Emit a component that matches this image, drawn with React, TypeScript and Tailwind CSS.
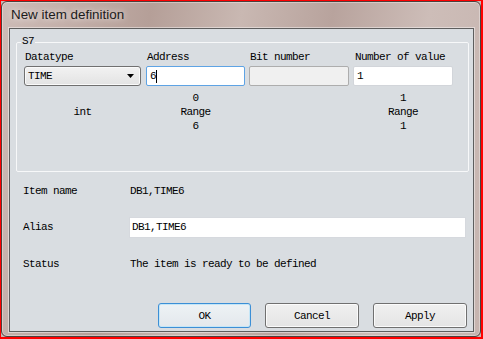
import React from 'react';

const mono = "font-['Liberation_Mono',monospace] text-[11px] tracking-[-0.6px] leading-[12px] text-black";

function Column({ lines }: { lines: string[] }) {
  return (
    <div className="flex flex-col items-center leading-[14px]">
      {lines.map((l, i) => (
        <span key={i} className="h-[14px]">{l}</span>
      ))}
    </div>
  );
}

export default function App() {
  return (
    <div className="w-[483px] h-[339px] border-l border-t border-r-2 border-b-2 border-[#ff0000] bg-[#c7b5b0]">
      <div className="h-full flex flex-col rounded-[6px] border border-[#4d403c] bg-[linear-gradient(100deg,#cdbcb7_0%,#c4b0aa_12%,#b59f98_28%,#c9b8b2_45%,#b8a39d_62%,#cdbdb8_80%,#c6b4af_100%)] shadow-[inset_0_0_0_1px_rgba(255,255,255,0.35)]">
        {/* Title bar */}
        <div className="h-[26px] flex items-center pl-[9px]">
          <span className="font-['Liberation_Sans',Arial,sans-serif] text-[13.4px] text-[#1b1b1b] [text-shadow:0_0_6px_rgba(255,255,255,0.9)]">
            New item definition
          </span>
        </div>

        {/* Client area */}
        <div className={`flex-1 ml-[7px] mr-[6px] mb-[4px] flex flex-col border border-[#5e5e5e] bg-[#d9dde1] shadow-[0_0_0_1px_rgba(255,255,255,0.45)] ${mono}`}>
          {/* S7 group box */}
          <div className="relative mt-[13px] ml-[6px] mr-[4px] h-[130px] border border-[#f7f8f9] rounded-[2px] pl-[7px] pt-[8px]">
            <span className="absolute left-[4px] top-[-8px] px-[1px] bg-[#d9dde1]">S7</span>

            <div className="grid grid-cols-[122px_103px_104px_100px]">
              <span className="pl-[1px]">Datatype</span>
              <span className="pl-[1px]">Address</span>
              <span className="pl-[1px]">Bit number</span>
              <span className="pl-[2px]">Number of value</span>
            </div>

            <div className="grid grid-cols-[122px_103px_104px_100px] mt-[3px]">
              <div className="w-[117px] h-[20px] flex items-center justify-between px-[3px] rounded-[3px] border border-[#707070] bg-[linear-gradient(#f2f2f2,#e3e3e3)] shadow-[inset_0_0_0_1px_#fafafa]">
                <span>TIME</span>
                <svg width="8" height="5" viewBox="0 0 8 5" className="mr-[2px]">
                  <path d="M0 0h7L3.5 4z" fill="#000" />
                </svg>
              </div>
              <div className="w-[99px] h-[20px] flex items-center px-[3px] rounded-[2px] border border-[#5ea3e4] bg-white">
                <span>6</span>
                <span className="w-px h-[13px] bg-black" />
              </div>
              <div className="w-[100px] h-[20px] rounded-[2px] border border-[#adadad] bg-[#f0f0f0]" />
              <div className="w-[100px] h-[20px] flex items-center px-[3px] rounded-[2px] border border-[#d2d5da] bg-white">
                <span>1</span>
              </div>
            </div>

            <div className="grid grid-cols-[122px_103px_104px_100px] mt-[5px]">
              <div className="w-[117px]">
                <Column lines={['', 'int', '']} />
              </div>
              <div className="w-[99px]">
                <Column lines={['0', 'Range', '6']} />
              </div>
              <div />
              <div className="w-[100px]">
                <Column lines={['1', 'Range', '1']} />
              </div>
            </div>
          </div>

          {/* Item rows */}
          <div className="grid grid-cols-[106px_1fr] items-center ml-[13px] mr-[8px] mt-[13px]">
            <span>Item name</span>
            <span className="pl-[1px]">DB1,TIME6</span>
          </div>

          <div className="grid grid-cols-[106px_1fr] items-center ml-[13px] mr-[7px] mt-[20px]">
            <span className="-mt-[2px]">Alias</span>
            <div className="h-[21px] flex items-center px-[2px] border border-[#d6d9de] bg-white">
              <span className="-mt-[1px]">DB1,TIME6</span>
            </div>
          </div>

          <div className="grid grid-cols-[106px_1fr] items-center ml-[13px] mr-[8px] mt-[20px]">
            <span>Status</span>
            <span className="pl-[1px]">The item is ready to be defined</span>
          </div>

          {/* Buttons */}
          <div className="mt-auto mb-[3px] mr-[6px] flex justify-end gap-[14px]">
            <button className="w-[93px] h-[25px] rounded-[3px] border border-[#3c8fd6] bg-[linear-gradient(#eef2f5,#e3e8ec)] shadow-[inset_0_0_0_1px_#c5e6f7]">
              OK
            </button>
            <button className="w-[94px] h-[25px] rounded-[3px] border border-[#707070] bg-[linear-gradient(#f0f0f0,#e4e4e4)] shadow-[inset_0_0_0_1px_#fbfbfb]">
              Cancel
            </button>
            <button className="w-[94px] h-[25px] rounded-[3px] border border-[#707070] bg-[linear-gradient(#f0f0f0,#e4e4e4)] shadow-[inset_0_0_0_1px_#fbfbfb]">
              Apply
            </button>
          </div>
        </div>
      </div>
    </div>
  );
}
